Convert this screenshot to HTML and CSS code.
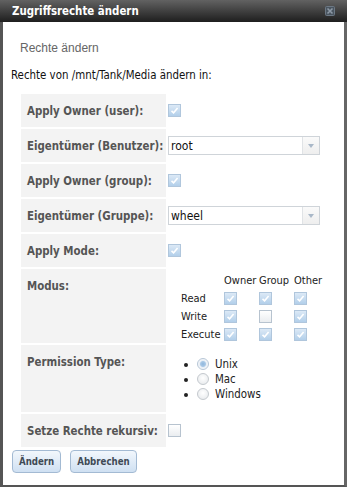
FILE: index.html
```html
<!DOCTYPE html>
<html lang="de">
<head>
<meta charset="utf-8">
<title>Zugriffsrechte ändern</title>
<link rel="stylesheet" href="styles.css">
</head>
<body>
<div class="window">
  <div class="titlebar">
    <span class="title">Zugriffsrechte ändern</span>
    <span class="close" aria-label="close">
      <svg width="10" height="10" viewBox="0 0 10 10"><rect x="0.5" y="0.5" width="9" height="9" rx="1" fill="#4a5560" stroke="#6c7884"/><path d="M2.5 2.5 L7.5 7.5 M7.5 2.5 L2.5 7.5" stroke="#8e9aa6" stroke-width="1.6"/></svg>
    </span>
  </div>
  <div class="content">
    <div class="legend">Rechte ändern</div>
    <div class="intro">Rechte von /mnt/Tank/Media ändern in:</div>
    <div class="form">
      <div class="label">Apply Owner (user):</div>
      <div class="value"><span class="cb checked"></span></div>

      <div class="label">Eigentümer (Benutzer):</div>
      <div class="value"><div class="select"><span class="sel-text">root</span><span class="sel-arrow"></span></div></div>

      <div class="label">Apply Owner (group):</div>
      <div class="value"><span class="cb checked"></span></div>

      <div class="label">Eigentümer (Gruppe):</div>
      <div class="value"><div class="select"><span class="sel-text">wheel</span><span class="sel-arrow"></span></div></div>

      <div class="label">Apply Mode:</div>
      <div class="value"><span class="cb checked"></span></div>

      <div class="label top">Modus:</div>
      <div class="value top">
        <div class="modes">
          <span></span><span class="mh">Owner</span><span class="mh">Group</span><span class="mh">Other</span>
          <span class="mr">Read</span><span><span class="cb checked"></span></span><span><span class="cb checked"></span></span><span><span class="cb checked"></span></span>
          <span class="mr">Write</span><span><span class="cb checked"></span></span><span><span class="cb"></span></span><span><span class="cb checked"></span></span>
          <span class="mr">Execute</span><span><span class="cb checked"></span></span><span><span class="cb checked"></span></span><span><span class="cb checked"></span></span>
        </div>
      </div>

      <div class="label top">Permission Type:</div>
      <div class="value top">
        <ul class="radios">
          <li><span class="radio on"></span>Unix</li>
          <li><span class="radio"></span>Mac</li>
          <li><span class="radio"></span>Windows</li>
        </ul>
      </div>

      <div class="label">Setze Rechte rekursiv:</div>
      <div class="value"><span class="cb"></span></div>
    </div>
    <div class="buttons">
      <button class="btn">Ändern</button>
      <button class="btn">Abbrechen</button>
    </div>
  </div>
</div>
</body>
</html>
```

FILE: styles.css
```css
html, body {
  margin: 0;
  padding: 0;
  background: #ffffff;
}
body {
  font-family: "DejaVu Sans Condensed", "DejaVu Sans", Verdana, sans-serif;
  font-stretch: condensed;
  font-size: 11.4px;
  color: #222;
}
.window {
  width: 347px;
  height: 487px;
  box-sizing: border-box;
  border-left: 3px solid #555;
  border-right: 3px solid #666;
  border-bottom: 2px solid #555;
  background: #fff;
  display: flex;
  flex-direction: column;
}
.titlebar {
  height: 22px;
  margin: 0 -3px;
  padding: 0 12px 0 12px;
  background: linear-gradient(#626262, #1e1e1e);
  display: flex;
  align-items: center;
  justify-content: space-between;
}
.title {
  color: #fff;
  font-weight: bold;
  font-size: 11.4px;
}
.close {
  display: flex;
}
.content {
  padding: 0 0 0 8px;
  display: flex;
  flex-direction: column;
}
.legend {
  font-family: "Liberation Sans", Arial, sans-serif;
  font-stretch: normal;
  font-size: 12px;
  color: #666;
  margin: 19px 0 0 9px;
}
.intro {
  font-size: 11.4px;
  color: #111;
  margin: 13px 0 0 0;
}
.form {
  display: grid;
  grid-template-columns: 145px 155px;
  column-gap: 2px;
  row-gap: 2px;
  margin: 12px 0 0 10px;
}
.label {
  background: #f3f3f3;
  color: #555;
  font-weight: bold;
  font-size: 11.4px;
  height: 33px;
  box-sizing: border-box;
  padding: 0 6px;
  display: flex;
  align-items: center;
  white-space: nowrap;
}
.value {
  display: flex;
  align-items: center;
  height: 33px;
}
.label.top {
  align-items: flex-start;
  padding-top: 10px;
  height: auto;
}
.value.top {
  height: auto;
  align-items: flex-start;
}
.cb {
  display: inline-block;
  width: 13px;
  height: 13px;
  box-sizing: border-box;
  border: 1px solid #b7c3cf;
  background: linear-gradient(#ffffff, #eaedf0);
  vertical-align: middle;
}
.cb.checked {
  border-color: #b0c6dc;
  background:
    url("data:image/svg+xml;utf8,<svg xmlns='http://www.w3.org/2000/svg' width='11' height='11'><path d='M2.5 5.8 L4.6 7.8 L8.6 3' fill='none' stroke='white' stroke-width='1.6'/></svg>") center/11px 11px no-repeat,
    linear-gradient(#dce9f6, #b2cfea);
}
.select {
  width: 152px;
  height: 19px;
  box-sizing: border-box;
  border: 1px solid #cfd4d9;
  background: #fff;
  display: flex;
  align-items: center;
}
.sel-text {
  flex: 1;
  padding-left: 2px;
  font-size: 12px;
  color: #111;
}
.sel-arrow {
  width: 16px;
  height: 100%;
  border-left: 1px solid #e0e3e6;
  background: linear-gradient(#fafafa, #eeeeee);
  position: relative;
}
.sel-arrow::after {
  content: "";
  position: absolute;
  left: 5px;
  top: 7px;
  border-left: 3px solid transparent;
  border-right: 3px solid transparent;
  border-top: 4px solid #a9b8c8;
}
.modes {
  display: grid;
  grid-template-columns: 43px 35px 35px 30px;
  grid-auto-rows: 18px;
  margin: 2px 0 0 13px;
  font-size: 11px;
  color: #222;
  align-items: center;
}
.mh, .mr {
  white-space: nowrap;
}
.modes > span > .cb {
  display: block;
}
.radios {
  margin: 12px 0 10px 0;
  padding: 0 0 0 30px;
  list-style: disc;
  font-size: 11.4px;
  color: #222;
}
.radios li {
  height: 15px;
  line-height: 15px;
}
.radio {
  display: inline-block;
  width: 12px;
  height: 12px;
  box-sizing: border-box;
  border-radius: 50%;
  border: 1px solid #c4c9ce;
  background: radial-gradient(circle at 50% 40%, #ffffff, #e4e7ea);
  vertical-align: -2px;
  margin: 0 6px 0 -1px;
}
.radio.on {
  background: radial-gradient(circle, #8fb6dc 0, #a9c8e6 2.5px, #e8eef5 3.5px, #ffffff 6px);
  border-color: #b7c6d6;
}
.buttons {
  display: flex;
  gap: 9px;
  margin: 3px 0 0 1px;
}
.btn {
  font-family: "DejaVu Sans Condensed", "DejaVu Sans", Verdana, sans-serif;
  font-stretch: condensed;
  font-weight: bold;
  font-size: 9.6px;
  color: #3f4a55;
  height: 23px;
  padding: 0 6px;
  border: 1px solid #a3bad3;
  border-radius: 4px;
  background: linear-gradient(#f2f7fc, #cfe0f2);
  cursor: pointer;
}
```
